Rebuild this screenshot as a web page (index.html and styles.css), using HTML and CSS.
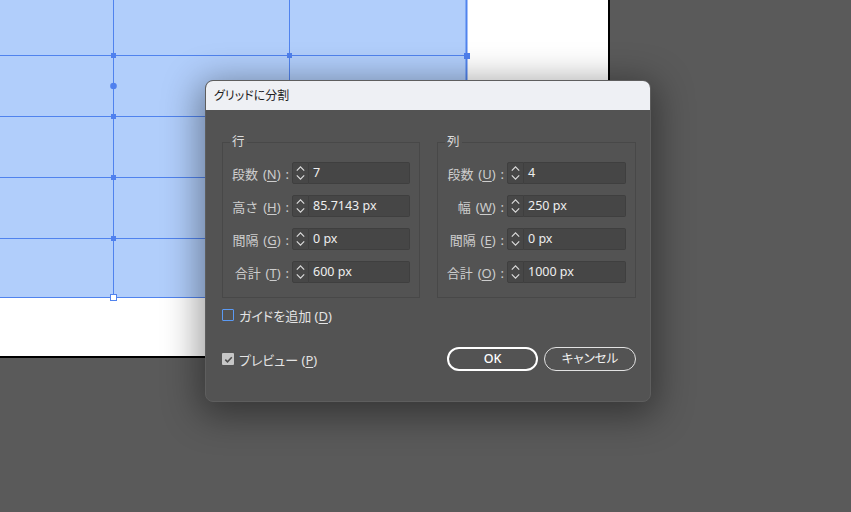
FILE: index.html
```html
<!DOCTYPE html>
<html lang="ja">
<head>
<meta charset="utf-8">
<title>グリッドに分割</title>
<link rel="stylesheet" href="styles.css">
</head>
<body>
<div class="workspace">
  <div class="artboard">
    <div class="selection">
      <svg class="grid" width="470" height="302" viewBox="0 0 470 302">
        <g stroke="#5083ee" stroke-width="1" fill="none">
          <line x1="0" y1="55.5" x2="466" y2="55.5"/>
          <line x1="0" y1="116.5" x2="466" y2="116.5"/>
          <line x1="0" y1="177.5" x2="466" y2="177.5"/>
          <line x1="0" y1="238.5" x2="466" y2="238.5"/>
          <line x1="0" y1="297.5" x2="466" y2="297.5"/>
          <line x1="113.5" y1="0" x2="113.5" y2="298"/>
          <line x1="289.5" y1="0" x2="289.5" y2="298"/>
          <line x1="466.5" y1="0" x2="466.5" y2="298" stroke-width="2"/>
        </g>
        <g fill="#4f80ee">
          <rect x="111" y="53" width="5" height="5"/>
          <rect x="287" y="53" width="5" height="5"/>
          <rect x="464" y="53" width="6" height="6"/>
          <rect x="111" y="114" width="5" height="5"/>
          <rect x="111" y="175" width="5" height="5"/>
          <rect x="111" y="236" width="5" height="5"/>
          <circle cx="113.5" cy="86" r="3.3"/>
        </g>
        <rect x="110.5" y="294.5" width="6" height="6" fill="#fff" stroke="#5083ee" stroke-width="1"/>
      </svg>
    </div>
  </div>

  <div class="dialog">
    <div class="titlebar">グリッドに分割</div>
    <div class="dialog-body">
      <div class="groups">
        <fieldset class="group">
          <legend>行</legend>
          <div class="row"><span class="lbl">段数 (<u>N</u>) :</span><span class="spin"><svg width="15" height="20" viewBox="0 0 15 20"><path d="M3.8 7.6 L7.5 3.9 L11.2 7.6 M3.8 12.4 L7.5 16.1 L11.2 12.4" fill="none" stroke="#dadada" stroke-width="1.2"/></svg></span><span class="field">7</span></div>
          <div class="row"><span class="lbl">高さ (<u>H</u>) :</span><span class="spin"><svg width="15" height="20" viewBox="0 0 15 20"><path d="M3.8 7.6 L7.5 3.9 L11.2 7.6 M3.8 12.4 L7.5 16.1 L11.2 12.4" fill="none" stroke="#dadada" stroke-width="1.2"/></svg></span><span class="field">85.7143 px</span></div>
          <div class="row"><span class="lbl">間隔 (<u>G</u>) :</span><span class="spin"><svg width="15" height="20" viewBox="0 0 15 20"><path d="M3.8 7.6 L7.5 3.9 L11.2 7.6 M3.8 12.4 L7.5 16.1 L11.2 12.4" fill="none" stroke="#dadada" stroke-width="1.2"/></svg></span><span class="field">0 px</span></div>
          <div class="row"><span class="lbl">合計 (<u>T</u>) :</span><span class="spin"><svg width="15" height="20" viewBox="0 0 15 20"><path d="M3.8 7.6 L7.5 3.9 L11.2 7.6 M3.8 12.4 L7.5 16.1 L11.2 12.4" fill="none" stroke="#dadada" stroke-width="1.2"/></svg></span><span class="field">600 px</span></div>
        </fieldset>
        <fieldset class="group">
          <legend>列</legend>
          <div class="row"><span class="lbl">段数 (<u>U</u>) :</span><span class="spin"><svg width="15" height="20" viewBox="0 0 15 20"><path d="M3.8 7.6 L7.5 3.9 L11.2 7.6 M3.8 12.4 L7.5 16.1 L11.2 12.4" fill="none" stroke="#dadada" stroke-width="1.2"/></svg></span><span class="field">4</span></div>
          <div class="row"><span class="lbl">幅 (<u>W</u>) :</span><span class="spin"><svg width="15" height="20" viewBox="0 0 15 20"><path d="M3.8 7.6 L7.5 3.9 L11.2 7.6 M3.8 12.4 L7.5 16.1 L11.2 12.4" fill="none" stroke="#dadada" stroke-width="1.2"/></svg></span><span class="field">250 px</span></div>
          <div class="row"><span class="lbl">間隔 (<u>E</u>) :</span><span class="spin"><svg width="15" height="20" viewBox="0 0 15 20"><path d="M3.8 7.6 L7.5 3.9 L11.2 7.6 M3.8 12.4 L7.5 16.1 L11.2 12.4" fill="none" stroke="#dadada" stroke-width="1.2"/></svg></span><span class="field">0 px</span></div>
          <div class="row"><span class="lbl">合計 (<u>O</u>) :</span><span class="spin"><svg width="15" height="20" viewBox="0 0 15 20"><path d="M3.8 7.6 L7.5 3.9 L11.2 7.6 M3.8 12.4 L7.5 16.1 L11.2 12.4" fill="none" stroke="#dadada" stroke-width="1.2"/></svg></span><span class="field">1000 px</span></div>
        </fieldset>
      </div>

      <div class="check-row">
        <span class="box box-empty"></span>
        <span class="check-text">ガイドを追加 (<u>D</u>)</span>
      </div>

      <div class="footer">
        <div class="check-row preview">
          <span class="box box-checked"><svg width="11" height="11" viewBox="0 0 11 11"><path d="M2.3 5.6 L4.5 7.8 L8.8 3.2" fill="none" stroke="#4e4e4e" stroke-width="1.6"/></svg></span>
          <span class="check-text">プレビュー (<u>P</u>)</span>
        </div>
        <div class="buttons">
          <button class="btn btn-primary">OK</button>
          <button class="btn">キャンセル</button>
        </div>
      </div>
    </div>
  </div>
</div>
</body>
</html>
```

FILE: styles.css
```css
* { box-sizing: border-box; }

html, body {
  margin: 0;
  padding: 0;
}

body {
  width: 851px;
  height: 512px;
  overflow: hidden;
  background: #5a5a5a;
  font-family: "Noto Sans", "Noto Sans CJK JP", sans-serif;
}

.workspace {
  position: relative;
  width: 851px;
  height: 512px;
}

.artboard {
  position: absolute;
  left: 0;
  top: 0;
  width: 610px;
  height: 358px;
  background: #ffffff;
  border-right: 2px solid #000;
  border-bottom: 2px solid #000;
}

.selection {
  position: absolute;
  left: 0;
  top: 0;
  width: 466px;
  height: 298px;
  background: #b1cefb;
}

.grid {
  position: absolute;
  left: 0;
  top: 0;
  overflow: visible;
}

.dialog {
  position: absolute;
  left: 205px;
  top: 80px;
  width: 446px;
  height: 322px;
  border-radius: 8px;
  overflow: hidden;
  background: #535353;
  border: 1px solid #5e5e5e;
  box-shadow: 0 8px 36px 6px rgba(0, 0, 0, 0.4);
  display: flex;
  flex-direction: column;
  font-feature-settings: "palt" 1;
}

.titlebar {
  height: 29px;
  flex: 0 0 29px;
  background: #eef0f4;
  color: #1e1e1e;
  font-size: 12px;
  line-height: 29px;
  padding-left: 9px;
  margin: 0 -1px;
}

.dialog-body {
  padding: 24px 14px 0 16px;
  display: flex;
  flex-direction: column;
}

.groups {
  display: grid;
  grid-template-columns: 198px 199px;
  column-gap: 17px;
}

.group {
  margin: 0;
  min-width: 0;
  border: 1px solid #484848;
  padding: 12px 9px 14px 7px;
  display: flex;
  flex-direction: column;
  gap: 11px;
}

.group legend {
  padding: 0 2px;
  font-size: 12.5px;
  line-height: 16px;
  color: #dcdcdc;
}

.row {
  display: flex;
  align-items: center;
  height: 22px;
}

.lbl {
  width: 62px;
  flex: 0 0 62px;
  text-align: right;
  padding-right: 3px;
  font-size: 13px;
  word-spacing: 1.5px;
  color: #cdcdcd;
  white-space: nowrap;
  font-feature-settings: normal;
}

.lbl u, .check-text u {
  text-underline-offset: 2px;
}

.spin {
  width: 17px;
  height: 22px;
  flex: 0 0 17px;
  background: #474747;
  border: 1px solid #3f3f3f;
  border-radius: 2px 0 0 2px;
  display: flex;
  align-items: center;
  justify-content: center;
}

.spin svg { display: block; }

.field {
  flex: 1 1 auto;
  height: 22px;
  background: #464646;
  border: 1px solid #3f3f3f;
  border-left: none;
  border-radius: 0 2px 2px 0;
  padding-left: 4px;
  font-size: 12.5px;
  line-height: 20px;
  color: #eeeeee;
  white-space: nowrap;
}

.check-row {
  display: flex;
  align-items: center;
  gap: 5px;
  height: 16px;
}

.dialog-body > .check-row {
  margin-top: 9px;
}

.box {
  width: 12px;
  height: 12px;
  flex: 0 0 12px;
  border-radius: 1px;
}

.box-empty {
  border: 1.6px solid #5b9af4;
}

.box-checked {
  background: #c6c6c6;
  display: flex;
  align-items: center;
  justify-content: center;
}

.box-checked svg { display: block; }

.check-text {
  font-size: 13px;
  color: #e4e4e4;
  white-space: nowrap;
}

.footer {
  margin-top: 24px;
  display: flex;
  align-items: center;
  justify-content: space-between;
}

.buttons {
  display: flex;
  gap: 6px;
}

.btn {
  height: 24px;
  width: 92px;
  border-radius: 12px;
  border: 1px solid #e2e2e2;
  background: transparent;
  color: #f2f2f2;
  font-family: "Noto Sans", "Noto Sans CJK JP", sans-serif;
  font-feature-settings: "palt" 1;
  font-size: 12.5px;
  padding: 0;
  line-height: 20px;
}

.btn-primary {
  width: 91px;
  border: 2px solid #ffffff;
  font-weight: 500;
  color: #ffffff;
}
```
